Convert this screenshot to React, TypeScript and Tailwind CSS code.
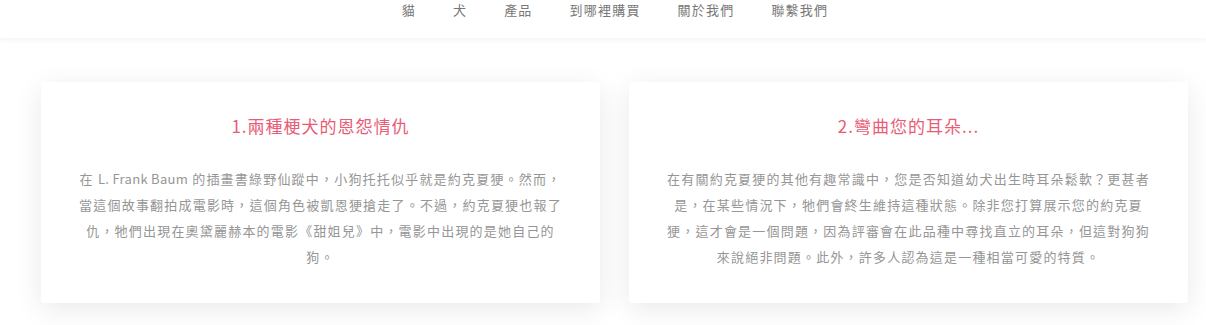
const navItems = ['貓', '犬', '產品', '到哪裡購買', '關於我們', '聯繫我們'];

const cards = [
  {
    title: '1.兩種梗犬的恩怨情仇',
    body: (
      <>
        在 <span className="tracking-[0.3px]">L. Frank Baum</span> 的插畫書綠野仙蹤中，小狗托托似乎就是約克夏㹴。然而，當這個故事翻拍成電影時，這個角色被凱恩㹴搶走了。不過，約克夏㹴也報了仇，牠們出現在奧黛麗赫本的電影《甜姐兒》中，電影中出現的是她自己的狗。
      </>
    ),
  },
  {
    title: '2.彎曲您的耳朵...',
    body: '在有關約克夏㹴的其他有趣常識中，您是否知道幼犬出生時耳朵鬆軟？更甚者是，在某些情況下，牠們會終生維持這種狀態。除非您打算展示您的約克夏㹴，這才會是一個問題，因為評審會在此品種中尋找直立的耳朵，但這對狗狗來說絕非問題。此外，許多人認為這是一種相當可愛的特質。',
  },
];

export default function App() {
  return (
    <div
      lang="zh-Hant-TW"
      className="min-h-screen bg-white font-['Noto_Sans_CJK_TC','Noto_Sans',sans-serif]"
    >
      <header className="relative z-10 h-[38px] bg-white shadow-[0_2px_6px_rgba(0,0,0,0.05)]">
        <nav className="flex justify-center gap-[37px] pl-[24px]">
          {navItems.map((item) => (
            <a
              key={item}
              href="#"
              className="text-[13px] leading-[20px] tracking-[1.2px] text-[#777777]"
            >
              {item}
            </a>
          ))}
        </nav>
      </header>

      <main className="flex gap-[29px] pl-[41px] pt-[44px] pb-[22px]">
        {cards.map((card) => (
          <div
            key={card.title}
            className="h-[221px] w-[559px] rounded-[3px] bg-white px-[35px] pt-[31px] text-center shadow-[0_6px_28px_rgba(0,0,0,0.09)]"
          >
            <h2 className="text-[17px] leading-[26px] tracking-[1px] text-[#e85c76]">
              {card.title}
            </h2>
            <p className="mt-[27px] text-[13px] leading-[26px] tracking-[1.2px] text-[#969696]">
              {card.body}
            </p>
          </div>
        ))}
      </main>
    </div>
  );
}
